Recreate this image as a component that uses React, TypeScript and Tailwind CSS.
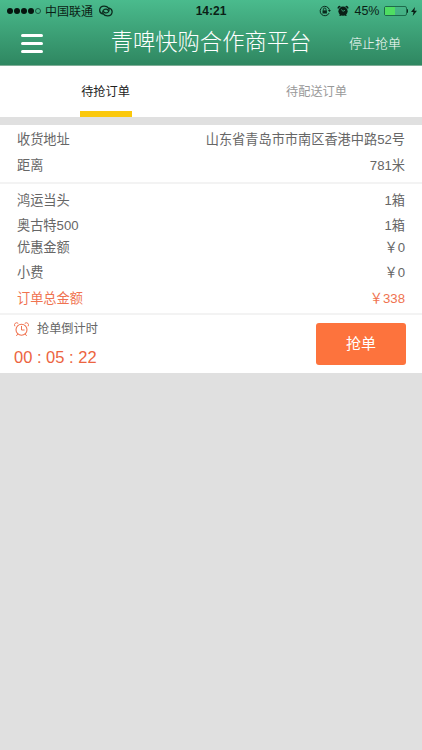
type Row = { label: string; value: string; className: string };

const ADDRESS_ROWS: Row[] = [
  { label: "收货地址", value: "山东省青岛市市南区香港中路52号", className: "h-[26px] text-[#666]" },
  { label: "距离", value: "781米", className: "h-[26px] text-[#666]" },
];

const ORDER_ROWS: Row[] = [
  { label: "鸿运当头", value: "1箱", className: "h-[26px] text-[#666]" },
  { label: "奥古特500", value: "1箱", className: "h-[23px] text-[#666]" },
  { label: "优惠金额", value: "￥0", className: "h-[22px] text-[#666]" },
  { label: "小费", value: "￥0", className: "h-[28px] text-[#666]" },
  { label: "订单总金额", value: "￥338", className: "h-[23px] text-[#f07350]" },
];

function LinkIcon() {
  return (
    <svg className="ml-[6px] h-[12px] w-[14px]" viewBox="0 0 14 12" fill="none" stroke="#0b2a1d" strokeWidth="1.25" strokeLinecap="round">
      <path d="M3.6 8.9C-.8 7.600-.1 1.200 5 1.100c4.300-.1 6.300 3.700 4.100 6-1.400 1.400-3.800 1-4.500-.6" />
      <path d="M10.200 3.100c4.400 1.300 3.700 7.700-1.400 7.800-4.300.1-6.300-3.700-4.100-6 1.400-1.400 3.800-1 4.500.6" />
    </svg>
  );
}

function RotationLockIcon() {
  return (
    <svg className="h-[12px] w-[12px]" viewBox="0 0 12 12" fill="none" stroke="#0b2a1d">
      <path d="M10.1 8.1A4.7 4.7 0 1 1 10.4 4.8" />
      <path d="M8.9 5h3L10.5 7.1z" fill="#0b2a1d" stroke="none" />
      <rect x="3.5" y="5.4" width="4.4" height="3.1" fill="#0b2a1d" stroke="none" />
      <path d="M4.4 5.5V4.3a1.3 1.3 0 0 1 2.6 0v1.2" strokeWidth="0.9" />
    </svg>
  );
}

function StatusAlarmIcon() {
  return (
    <svg className="ml-[6px] h-[12px] w-[12px]" viewBox="0 0 12 12" fill="#0b1f16">
      <circle cx="6" cy="6.2" r="4.6" />
      <path d="M1 4A2 2 0 0 1 3.800 1.200zM11 4a2 2 0 0 0-2.800-2.800z" />
      <path d="M3 9.300 2.300 11h1.200l.8-1.200zM9 9.300l.7 1.700H8.500L7.700 9.800z" />
      <path d="M4.200 4.500 6 6.300l2-1" fill="none" stroke="#49b287" strokeWidth="0.8" />
    </svg>
  );
}

function AlarmIcon() {
  return (
    <svg className="h-[15px] w-[15px]" viewBox="0 0 15 15" fill="none" stroke="#f07350" strokeLinecap="round">
      <circle cx="7.5" cy="7.7" r="5.5" strokeWidth="1.1" />
      <path d="M7.5 4.3V8h2.7" />
      <path d="M.7 3.9A2.2 2.2 0 0 1 3.9 1.1M14.3 3.9a2.2 2.2 0 0 0-3.2-2.8" />
      <path d="M3.6 12.2 2.6 13.6M11.4 12.2l1 1.4" />
    </svg>
  );
}

function StatusBar() {
  return (
    <div className="grid h-[22px] grid-cols-[1fr_auto_1fr] items-center text-[#0b1f16]">
      <div className="flex items-center pl-[7px]">
        <div className="flex gap-[1px]">
          {[0, 1, 2, 3].map((i) => (
            <span key={i} className="h-[6px] w-[6px] rounded-full bg-[#06140e]" />
          ))}
          <span className="h-[6px] w-[6px] rounded-full border border-[#1c5740]" />
        </div>
        <span className="ml-[4px] pt-px text-[12px] leading-none">中国联通</span>
        <LinkIcon />
      </div>
      <span className="text-[12px] leading-none font-bold">14:21</span>
      <div className="flex items-center justify-end pr-[5px]">
        <RotationLockIcon />
        <StatusAlarmIcon />
        <span className="ml-[5px] text-[12.5px] leading-none">45%</span>
        <span className="ml-[4px] flex h-[10px] w-[23px] rounded-[2px] border border-[#1d6b4b]">
          <span className="w-[10px] bg-[#4fdd62]" />
        </span>
        <span className="h-[4px] w-[1.5px] rounded-r-sm bg-[#0b2a1d]" />
        <svg className="ml-[3px] h-[9px] w-[6px]" viewBox="0 0 6 9" fill="#0b1f16">
          <path d="M4 0 0 5h2.5L1.7 9 6 3.8H3.4z" />
        </svg>
      </div>
    </div>
  );
}

function Rows({ rows }: { rows: Row[] }) {
  return rows.map(({ label, value, className }) => (
    <div key={label} className={`flex items-center justify-between text-[13.2px] ${className}`}>
      <span>{label}</span>
      <span>{value}</span>
    </div>
  ));
}

export default function App() {
  return (
    <main className="flex h-[750px] w-[422px] flex-col overflow-hidden bg-[#e0e0e0] font-['Liberation_Sans','Noto_Sans_CJK_SC',sans-serif] whitespace-nowrap">
      <header className="h-[66px] border-b border-[#7fae97] bg-linear-to-b from-[#4abb8d] to-[#2f8761]">
        <StatusBar />
        <div className="grid h-[42px] grid-cols-[1fr_auto_1fr] items-center text-white">
          <button aria-label="menu" className="ml-[21px] flex w-[22px] flex-col gap-[5px]">
            <span className="h-[3px] w-full rounded-full bg-white" />
            <span className="h-[3px] w-full rounded-full bg-white" />
            <span className="h-[3px] w-full rounded-full bg-white" />
          </button>
          <h1 className="text-[22.3px] leading-none font-light">青啤快购合作商平台</h1>
          <button className="justify-self-end pr-[21px] text-[13px] leading-none font-light">停止抢单</button>
        </div>
      </header>

      <nav className="grid h-[51px] grid-cols-2 bg-white text-[12.2px]">
        <button className="flex flex-col items-center text-[#222]">
          <span className="flex h-[45px] items-center pt-[7px]">待抢订单</span>
          <span className="h-[6px] w-[52px] bg-[#fbc80b]" />
        </button>
        <button className="flex h-[45px] items-center justify-center pt-[7px] text-[#999]">待配送订单</button>
      </nav>

      <section className="mt-[8px] bg-white">
        <div className="h-[59px] border-b-2 border-[#f3f3f3] pt-[2px] pr-[17px] pl-[17px]">
          <Rows rows={ADDRESS_ROWS} />
        </div>
        <div className="h-[131px] border-b-2 border-[#f3f3f3] pt-[4px] pr-[17px] pl-[17px]">
          <Rows rows={ORDER_ROWS} />
        </div>
        <div className="flex h-[58px] items-center justify-between pr-[16px] pl-[14px]">
          <div className="flex flex-col">
            <div className="flex h-[18px] items-center gap-[8px] text-[12.2px] text-[#666]">
              <AlarmIcon />
              抢单倒计时
            </div>
            <div className="mt-[7px] text-[16.5px] leading-[22px] text-[#ec6440]">00 : 05 : 22</div>
          </div>
          <button className="h-[42px] w-[90px] rounded-[3px] bg-[#fd733d] text-[15px] text-white">抢单</button>
        </div>
      </section>
    </main>
  );
}
